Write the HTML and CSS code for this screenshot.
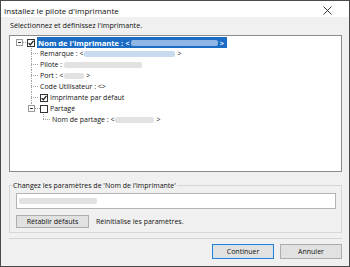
FILE: index.html
```html
<!DOCTYPE html>
<html lang="fr">
<head>
<meta charset="utf-8">
<title>Installez le pilote d'imprimante</title>
<link rel="stylesheet" href="styles.css">
</head>
<body>
<div class="window">
  <div class="titlebar">
    <span class="title">Installez le pilote d'imprimante</span>
    <svg class="close" width="9" height="9" viewBox="0 0 9 9"><path d="M0.5 0.5 L8.5 8.5 M8.5 0.5 L0.5 8.5" stroke="#222" stroke-width="0.9" fill="none"/></svg>
  </div>
  <div class="content">
    <p class="instruction">Sélectionnez et définissez l'imprimante.</p>
    <div class="tree">
      <div class="row">
        <span class="twig twig-root"><span class="expander"></span></span>
        <span class="check"><svg width="6" height="6" viewBox="0 0 6 6"><path d="M0.6 3.1 L2.3 4.8 L5.5 0.8" stroke="#1a1a1a" stroke-width="1.3" fill="none"/></svg></span>
        <span class="label selected">Nom de l'imprimante : &lt;<span class="redact redact-sel"></span>&gt;</span>
      </div>
      <div class="row lvl1">
        <span class="twig mid"></span>
        <span class="label">Remarque : &lt;<span class="redact redact-blue w-remarque"></span>&gt;</span>
      </div>
      <div class="row lvl1">
        <span class="twig mid"></span>
        <span class="label">Pilote : <span class="redact redact-gray w-pilote"></span></span>
      </div>
      <div class="row lvl1">
        <span class="twig mid"></span>
        <span class="label">Port : &lt;<span class="redact redact-gray w-port"></span>&gt;</span>
      </div>
      <div class="row lvl1">
        <span class="twig mid"></span>
        <span class="label">Code Utilisateur : &lt;&gt;</span>
      </div>
      <div class="row lvl1">
        <span class="twig mid"></span>
        <span class="check"><svg width="6" height="6" viewBox="0 0 6 6"><path d="M0.6 3.1 L2.3 4.8 L5.5 0.8" stroke="#1a1a1a" stroke-width="1.3" fill="none"/></svg></span>
        <span class="label">Imprimante par défaut</span>
      </div>
      <div class="row lvl1">
        <span class="twig last twig-expand"><span class="expander"></span></span>
        <span class="check"></span>
        <span class="label">Partagé</span>
      </div>
      <div class="row lvl2">
        <span class="twig last"></span>
        <span class="label">Nom de partage : &lt;<span class="redact redact-gray w-partage"></span>&gt;</span>
      </div>
    </div>
    <fieldset class="group">
      <legend>Changez les paramètres de 'Nom de l'imprimante'</legend>
      <div class="field"><span class="redact redact-gray w-field"></span></div>
      <div class="reset-row">
        <button class="btn btn-reset" type="button">Rétablir défauts</button>
        <span class="hint">Réinitialise les paramètres.</span>
      </div>
    </fieldset>
    <div class="separator"></div>
    <div class="actions">
      <button class="btn btn-primary" type="button">Continuer</button>
      <button class="btn" type="button">Annuler</button>
    </div>
  </div>
</div>
</body>
</html>
```
FILE: styles.css
```css
* { box-sizing: border-box; }
html, body { margin: 0; padding: 0; background: #ffffff; }
body {
  font-family: "Open Sans", "Noto Sans", "DejaVu Sans", sans-serif;
  font-size: 7px;
  color: #111111;
}
.window {
  width: 350px;
  height: 267px;
  border: 1px solid #4a4a4a;
  background: #f0f0f0;
  display: flex;
  flex-direction: column;
}
.titlebar {
  height: 16px;
  background: #ffffff;
  display: flex;
  align-items: center;
  justify-content: space-between;
  padding: 2px 17px 0 3px;
  flex: none;
}
.title { font-size: 8px; color: #111; }
.close { display: block; }
.content {
  padding: 0 7px 0 8px;
  display: flex;
  flex-direction: column;
  flex: 1;
}
.instruction {
  margin: 0;
  height: 18px;
  line-height: 17px;
  padding-left: 1px;
  font-size: 7.2px;
}
.tree {
  height: 137px;
  background: #ffffff;
  border: 1px solid #8c8c8c;
  padding: 1px 0 0 6px;
  display: flex;
  flex-direction: column;
}
.row {
  display: flex;
  align-items: center;
  height: 11px;
  white-space: nowrap;
}
.lvl1 { padding-left: 12px; }
.lvl2 { padding-left: 24px; }
.twig {
  flex: none;
  width: 12px;
  height: 11px;
  display: flex;
  align-items: center;
  background-repeat: no-repeat;
  background-image:
    repeating-linear-gradient(to bottom, #a3a3a3 0 1px, transparent 1px 2px),
    repeating-linear-gradient(to right, #a3a3a3 0 1px, transparent 1px 2px);
}
.twig.mid {
  background-size: 1px 11px, 7px 1px;
  background-position: 3px 0, 3px 5px;
}
.twig.last {
  background-size: 1px 6px, 7px 1px;
  background-position: 3px 0, 3px 5px;
}
.twig.twig-expand {
  background-size: 1px 2px, 5px 1px;
  background-position: 3px 0, 7px 5px;
}
.twig-root {
  width: 11px;
  background-image: repeating-linear-gradient(to right, #a3a3a3 0 1px, transparent 1px 2px);
  background-size: 4px 1px;
  background-position: 7px 5px;
}
.expander {
  width: 7px;
  height: 7px;
  border: 1px solid #9a9a9a;
  background: #ffffff;
  display: flex;
  align-items: center;
  justify-content: center;
}
.expander::before {
  content: "";
  width: 3px;
  height: 1px;
  background: #333;
}
.check {
  flex: none;
  width: 8px;
  height: 8px;
  border: 1px solid #333333;
  background: #ffffff;
  margin-right: 2px;
  display: flex;
  align-items: center;
  justify-content: center;
}
.check svg { display: block; }
.label {
  display: flex;
  align-items: center;
  height: 11px;
}
.selected {
  width: 190px;
  background: #1a6cc4;
  color: #ffffff;
  font-weight: bold;
  font-size: 7.6px;
  padding: 0 3px 0 1px;
}
.redact {
  display: inline-block;
  height: 6px;
  border-radius: 2px;
  margin: 0 2px 0 1px;
}
.redact-sel { flex: 1; background: #8fb6e4; }
.redact-blue { background: #c7daf0; }
.redact-gray { background: #e2e2e2; }
.w-remarque { width: 91px; }
.w-pilote { width: 78px; margin-left: 2px; }
.w-port { width: 20px; }
.w-partage { width: 39px; }
.w-field { width: 78px; margin: 0; }
.group {
  margin: 9px 0 0 0;
  padding: 0 5px 4px 6px;
  border: 1px solid #d6d6d6;
  min-width: 0;
}
.group legend {
  padding: 0 1px;
  margin-left: -4px;
  line-height: 9px;
}
.field {
  margin-top: 3px;
  height: 16px;
  background: #ffffff;
  border: 1px solid #b4b4b4;
  display: flex;
  align-items: center;
  padding-left: 2px;
}
.reset-row {
  margin-top: 6px;
  display: flex;
  align-items: center;
  gap: 7px;
}
.btn {
  font-family: inherit;
  font-size: 7px;
  color: #111111;
  background: #e1e1e1;
  border: 1px solid #adadad;
  border-radius: 0;
  height: 13px;
  padding: 0;
  margin: 0;
  line-height: 11px;
}
.btn-reset { width: 73px; }
.separator {
  margin-top: 5px;
  height: 1px;
  background: #d4d4d4;
}
.actions {
  margin-top: 5px;
  display: flex;
  justify-content: flex-end;
  gap: 6px;
}
.actions .btn {
  width: 62px;
  height: 15px;
}
.btn-primary {
  border-color: #2a7fd6;
  box-shadow: inset 0 0 0 1px #cfe2f6;
}
```
